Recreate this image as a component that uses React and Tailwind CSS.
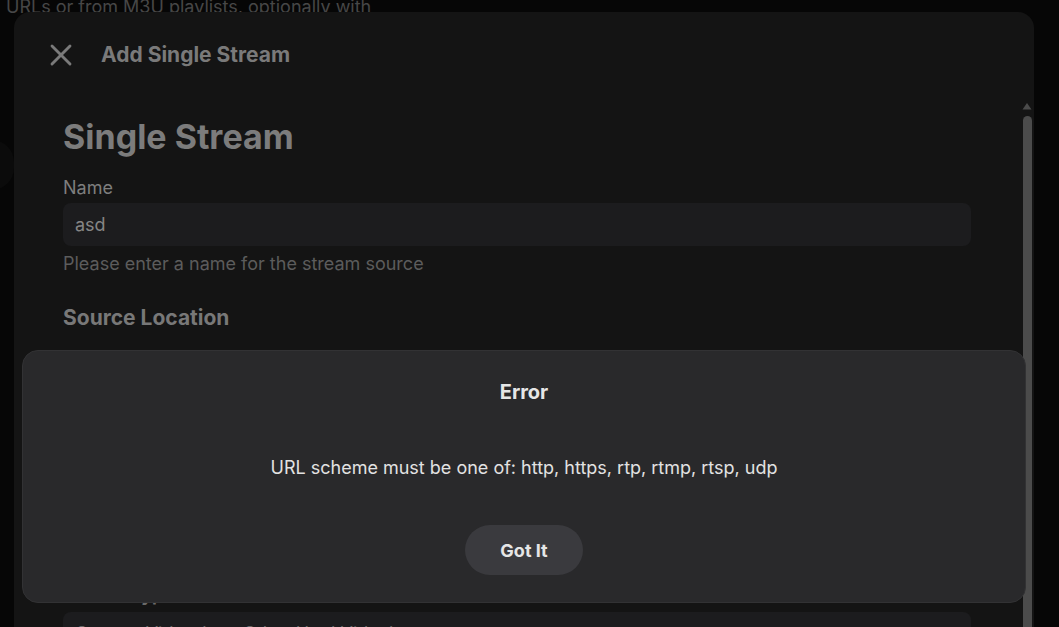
import React from 'react';
import { X } from 'lucide-react';

const App = () => {
  return (
    <div
      className="relative w-[1059px] h-[627px] overflow-hidden bg-[#060606]"
      style={{ fontFamily: 'Inter, "Noto Sans", sans-serif' }}
    >
      {/* Page behind the modal */}
      <p className="absolute left-[6px] top-[-7px] text-[18px] text-[#474747] whitespace-nowrap">
        URLs or from M3U playlists, optionally with
      </p>
      <div className="absolute left-[-30px] top-[140px] w-[44px] h-[50px] rounded-full bg-[#0b0b0b]" />

      {/* Add stream panel */}
      <div className="absolute left-[14px] top-[12px] w-[1020px] h-[700px] rounded-2xl bg-[#141414]">
        <div className="flex items-center h-[86px] pl-[29px]">
          <X className="w-[36px] h-[36px] text-[#7a7a7a]" strokeWidth={1.9} />
          <h2 className="ml-[22px] text-[21px] font-bold text-[#7a7a7a]">Add Single Stream</h2>
        </div>

        <div className="pl-[49px] pr-[63px]">
          <h1 className="mt-[17px] text-[34px] leading-[44px] font-bold text-[#7c7c7c]">Single Stream</h1>
          <label className="block mt-[17px] text-[18px] leading-[24px] text-[#7e7e7e]">Name</label>
          <div className="mt-[3px] h-[43px] rounded-lg bg-[#1c1c1e] flex items-center px-[12px] text-[18px] text-[#858585]">
            asd
          </div>
          <p className="mt-[6px] text-[18px] leading-[24px] text-[#5c5c5c]">Please enter a name for the stream source</p>
          <h3 className="mt-[28px] text-[21px] leading-[28px] font-bold text-[#787878]">Source Location</h3>

          <div className="mt-[253px] text-[18px] leading-[20px] font-bold text-[#6a6a6a]">Stream Type</div>
          <div className="mt-[7px] h-[43px] rounded-lg bg-[#1c1c1e] flex items-center px-[12px] text-[18px] text-[#6a6a6a]">
            Custom Video (e.g. Other Html Video)
          </div>
        </div>

        {/* scrollbar */}
        <div className="absolute right-[2px] top-[90px] w-[10px] flex flex-col items-center">
          <svg width="10" height="8" viewBox="0 0 10 8">
            <path d="M5 1 L9.5 7.5 L0.5 7.5 Z" fill="#4b4b4b" />
          </svg>
          <div className="mt-[6px] w-[9px] h-[600px] rounded-t-full bg-[#4b4b4b]" />
        </div>
      </div>

      {/* Error dialog */}
      <div className="absolute left-[22px] top-[350px] w-[1004px] h-[253px] rounded-2xl bg-[#29292b] border border-[#323234] flex flex-col items-center">
        <h2 className="mt-[27px] text-[20px] leading-[28px] font-bold text-[#e6e6e6]">Error</h2>
        <p className="mt-[50px] text-[18px] leading-[24px] text-[#e2e2e2]">
          URL scheme must be one of: http, https, rtp, rtmp, rtsp, udp
        </p>
        <button className="mt-[45px] w-[118px] h-[50px] rounded-full bg-[#3a3a3e] text-[18px] font-bold text-[#e6e6e6]">
          Got It
        </button>
      </div>
    </div>
  );
};

export default App;
